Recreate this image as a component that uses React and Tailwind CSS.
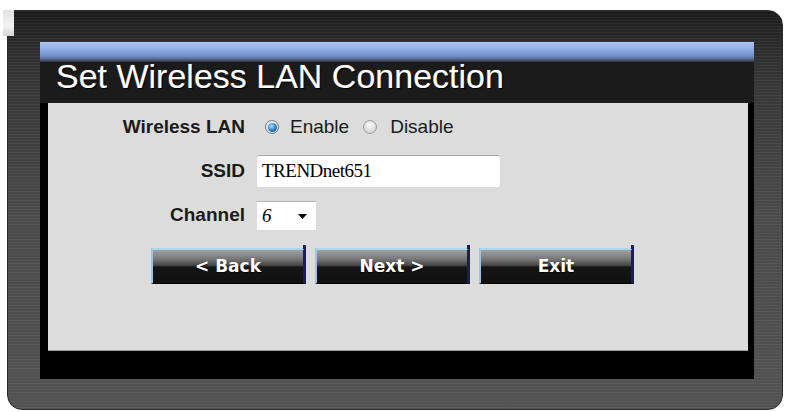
import React from 'react'

function Radio({ checked }) {
  return (
    <span
      className={
        checked
          ? 'shrink-0 flex items-center justify-center w-[14px] h-[14px] rounded-full border border-[#6f8196] bg-[radial-gradient(circle_at_50%_40%,#ffffff,#cfcfcf)]'
          : 'shrink-0 flex items-center justify-center w-[14px] h-[14px] rounded-full border border-[#9c9c9c] bg-[radial-gradient(circle_at_50%_35%,#fdfdfd,#c4c4c4)]'
      }
    >
      {checked && (
        <span className="shrink-0 w-[9px] h-[9px] rounded-full bg-[radial-gradient(circle_at_40%_35%,#b4e0ff,#2a84d0_50%,#0d4a8c)]" />
      )}
    </span>
  )
}

function WizButton({ children }) {
  return (
    <button className="relative w-[155px] h-[36px] border-t-2 border-t-[#a9d6f2] border-l-2 border-l-[#9cc6e6] border-r-[3px] border-r-[#1c1c58] border-b border-b-black bg-[linear-gradient(180deg,#a2a2a2,#767676_28%,#474747_46%,#151515_52%,#101010)] text-white font-bold text-[17px] font-['DejaVu_Sans',sans-serif] [text-shadow:0_1px_1px_rgba(0,0,0,0.6)]">
      <span className="absolute right-[-3px] top-[-5px] w-[3px] h-[4px] bg-[#1c1c58]" />
      {children}
    </button>
  )
}

export default function App() {
  return (
    <div className="relative w-[787px] h-[412px] overflow-hidden bg-white pt-[10px] pl-[7px] font-['Liberation_Sans',Arial,sans-serif]">
      {/* light patch at the top-left corner */}
      <div className="absolute left-[3px] top-[10px] w-[11px] h-[26px] bg-[linear-gradient(180deg,#e2e2e2,#f2f2f2_60%,#d6d6d6)] z-10" />

      <div className="w-[776px] h-[400px] rounded-[15px] rounded-tl-[8px] border border-[#2a2a2a] pt-[31px] pl-[32px] bg-[repeating-linear-gradient(180deg,rgba(255,255,255,0.05)_0px,rgba(255,255,255,0.05)_1px,transparent_1px,transparent_3px),linear-gradient(180deg,#1a1a1a,#2b2b2b_32px,#363636_70px,#4a4a4a_200px,#525252)]">
        <div className="w-[714px]">
          <div className="h-[20px] bg-[linear-gradient(180deg,#abc3f2,#8eabe4_40%,#7390cc_70%,#4d5a78_90%,#2e2e34)]" />
          <div className="h-[41px] bg-[#1b1b1b] pl-[16px] text-[34px] leading-[28px] text-white [text-shadow:0_0_2px_#000,1px_1px_1px_#000,0_0_1px_#fff]">
            Set Wireless LAN Connection
          </div>
          <div className="bg-black pl-[8px] pr-[6px] pb-[28px]">
            <div className="h-[248px] bg-[#dcdcdc] border-b border-[#9c9c9c] pt-[10px] text-[19px] text-[#1a1a1a]">
              <div className="flex items-center h-[28px]">
                <div className="w-[197px] text-right font-bold">Wireless LAN</div>
                <div className="ml-[20px] flex items-center">
                  <Radio checked />
                  <span className="ml-[11px]">Enable</span>
                  <span className="ml-[14px] flex">
                    <Radio />
                  </span>
                  <span className="ml-[13px]">Disable</span>
                </div>
              </div>

              <div className="flex items-center h-[32px] mt-[14px]">
                <div className="w-[197px] text-right font-bold">SSID</div>
                <div className="ml-[12px] w-[243px] h-[32px] bg-white border-t border-t-[#a8a8a8] rounded-[2px] pl-[5px] flex items-center font-['Liberation_Serif',serif] tracking-[-0.5px] text-black">
                  TRENDnet651
                </div>
              </div>

              <div className="flex items-center h-[29px] mt-[14px]">
                <div className="w-[197px] text-right font-bold">Channel</div>
                <div className="ml-[12px] w-[59px] h-[29px] bg-white border-t border-t-[#b4b4b4] pl-[5px] pr-[9px] flex items-center font-['Liberation_Serif',serif] italic text-black">
                  <span>6</span>
                  <svg className="ml-auto" width="9" height="5" viewBox="0 0 9 5">
                    <path d="M0 0h9L4.5 5z" fill="#000" />
                  </svg>
                </div>
              </div>

              <div className="flex gap-[9px] mt-[18px] ml-[103px]">
                <WizButton>&lt; Back</WizButton>
                <WizButton>Next &gt;</WizButton>
                <WizButton>Exit</WizButton>
              </div>
            </div>
          </div>
        </div>
      </div>
    </div>
  )
}
